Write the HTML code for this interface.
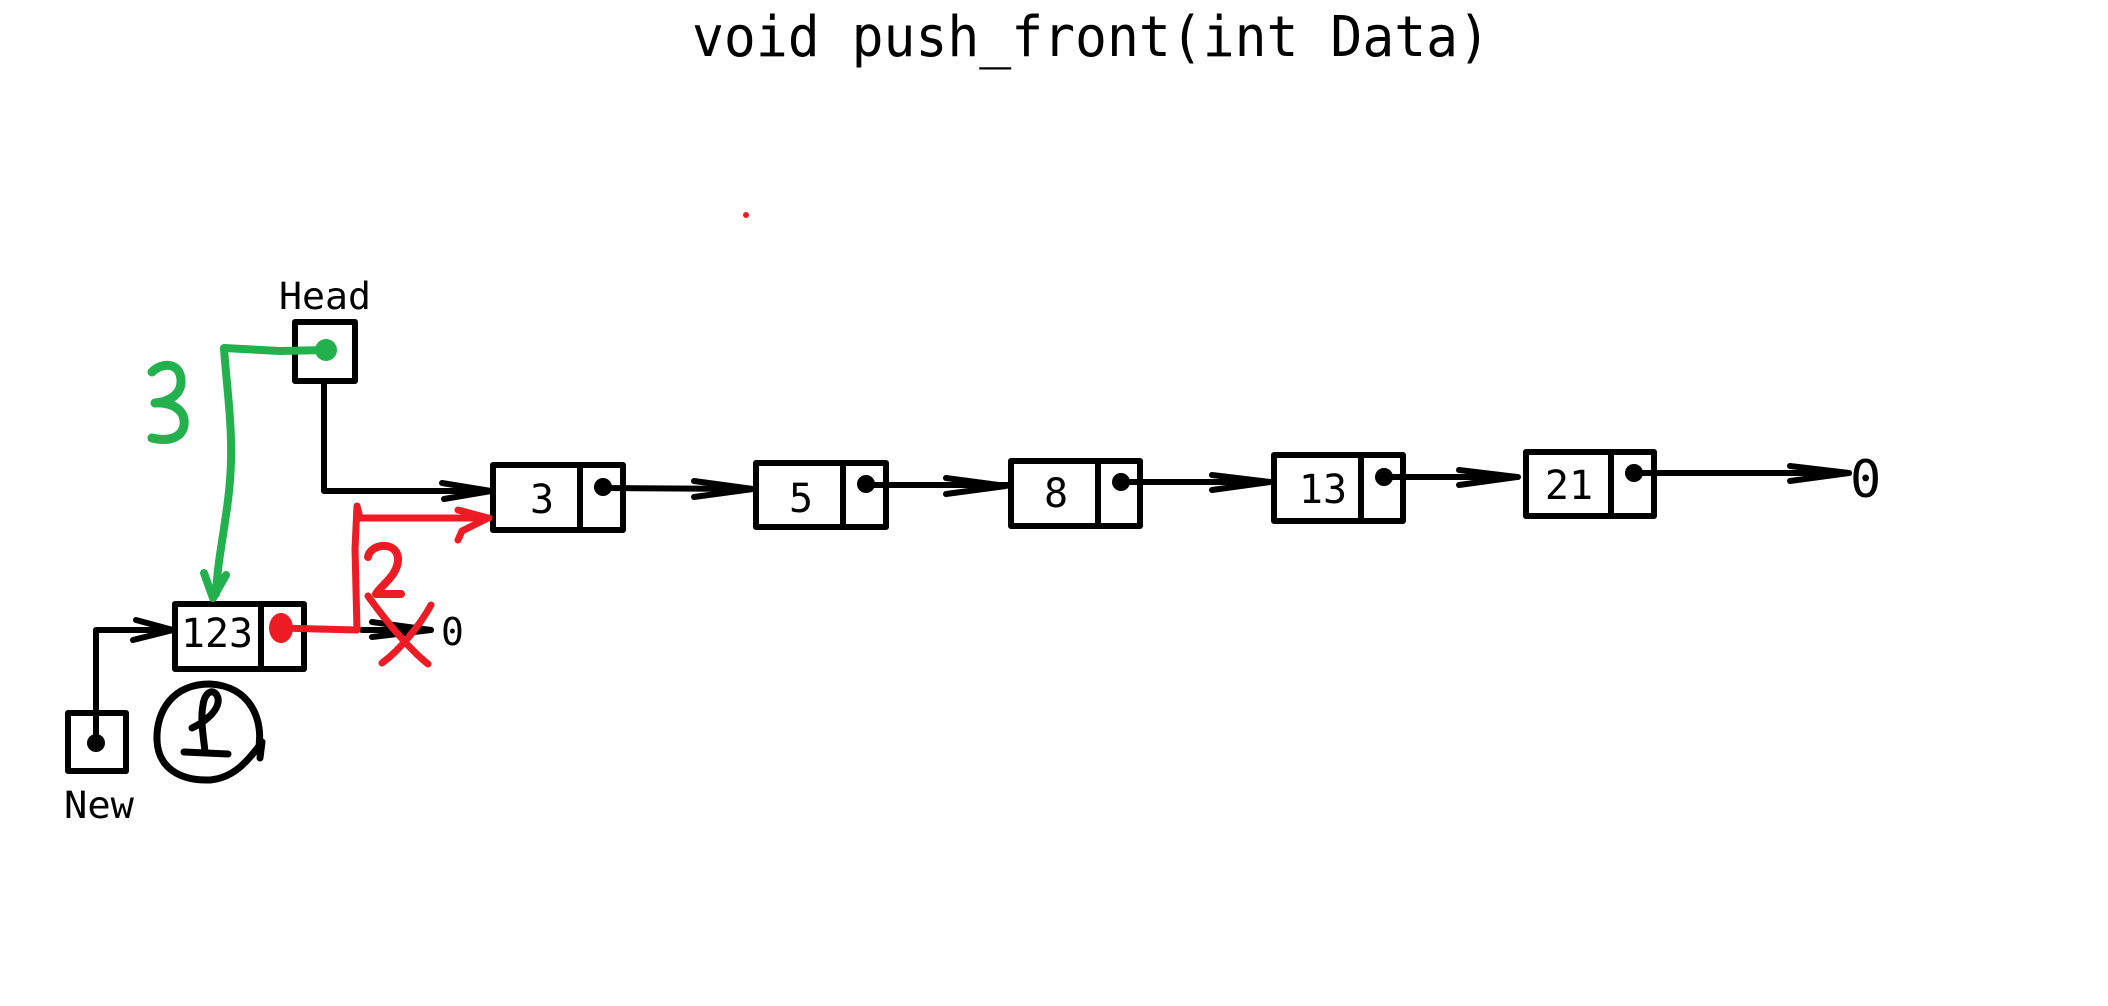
<!DOCTYPE html>
<html><head><meta charset="utf-8"><style>
html,body{margin:0;padding:0;background:#fff;width:2108px;height:1006px;overflow:hidden}
svg{display:block}
text{font-family:"DejaVu Sans Mono","Liberation Mono",monospace;fill:#000}
</style></head><body>
<svg width="2108" height="1006" viewBox="0 0 2108 1006" xmlns="http://www.w3.org/2000/svg">
<text x="692" y="56" font-size="56" textLength="798" lengthAdjust="spacingAndGlyphs">void push_front(int Data)</text>
<circle cx="746" cy="215" r="3" fill="#ed1c24"/>

<g fill="none" stroke="#000" stroke-width="6" stroke-linecap="round" stroke-linejoin="round">
<rect x="295" y="322" width="60" height="59"/>
<rect x="68" y="713" width="58" height="58"/>
<rect x="175" y="604" width="129" height="65"/><line x1="261" y1="604" x2="261" y2="669"/>
<rect x="493" y="465" width="130" height="65"/><line x1="580" y1="465" x2="580" y2="530"/>
<rect x="756" y="463" width="130" height="64"/><line x1="843" y1="463" x2="843" y2="527"/>
<rect x="1011" y="461" width="129" height="65"/><line x1="1098" y1="461" x2="1098" y2="526"/>
<rect x="1274" y="455" width="129" height="66"/><line x1="1361" y1="455" x2="1361" y2="521"/>
<rect x="1526" y="452" width="128" height="64"/><line x1="1611" y1="452" x2="1611" y2="516"/>

<polyline points="324,383 324,491 491,491"/>
<polyline points="442,483 491,491 444,499"/>
<polyline points="96,743 96,630 173,630"/>
<polyline points="136,620 173,630 133,640"/>
<line x1="603" y1="488" x2="754" y2="489"/><polyline points="694,481 753,489 694,497"/>
<line x1="866" y1="485" x2="1008" y2="485"/><polyline points="946,478 1006,486 946,494"/>
<line x1="1121" y1="482" x2="1271" y2="482"/><polyline points="1212,475 1270,482 1212,490"/>
<line x1="1384" y1="477" x2="1518" y2="477"/><polyline points="1459,470 1517,477 1459,485"/>
<line x1="1634" y1="473" x2="1849" y2="473"/><polyline points="1790,466 1849,473 1790,481"/>
<line x1="362" y1="630" x2="431" y2="630"/><polyline points="372,622 431,630 372,637"/>
<path d="M258,752 C265,720 250,686 210,684 C172,684 156,712 157,740 C158,768 180,781 210,780 C232,778 246,764 262,742 L260,758" stroke-width="7"/>
<path d="M192,728 C205,722 220,710 218,698 C215,688 205,690 203,705 C200,720 204,740 205,752 M184,752 L228,754" stroke-width="7"/>
</g>
<g fill="#000">
<circle cx="96" cy="743" r="9"/>
<circle cx="603" cy="487" r="9"/>
<circle cx="866" cy="484" r="9"/>
<circle cx="1121" cy="482" r="9"/>
<circle cx="1384" cy="477" r="9"/>
<circle cx="1634" cy="473" r="9"/>
</g>

<text x="279" y="309" font-size="37" textLength="92" lengthAdjust="spacingAndGlyphs">Head</text>
<text x="64" y="818" font-size="37" textLength="70" lengthAdjust="spacingAndGlyphs">New</text>
<text x="217" y="647" font-size="40" text-anchor="middle" textLength="72" lengthAdjust="spacingAndGlyphs">123</text>
<text x="542" y="513" font-size="40" text-anchor="middle">3</text>
<text x="801" y="512" font-size="40" text-anchor="middle">5</text>
<text x="1056" y="507" font-size="40" text-anchor="middle">8</text>
<text x="1323" y="503" font-size="40" text-anchor="middle">13</text>
<text x="1569" y="499" font-size="40" text-anchor="middle">21</text>
<text x="441" y="645" font-size="38">0</text>
<text x="1850" y="497" font-size="52">0</text>

<g fill="none" stroke="#22b14c" stroke-width="8" stroke-linecap="round" stroke-linejoin="round">
<path d="M326,350 L280,351 L224,348 C226,380 232,420 231,460 C230,510 218,550 216,594"/>
<path d="M204,573 L213,598 L226,575"/>
<path d="M152,372 C162,362 180,362 181,380 C182,395 168,402 155,403 C172,402 186,410 184,425 C182,438 168,442 152,438" stroke-width="9"/>
</g>
<circle cx="326" cy="350" r="11" fill="#22b14c"/>

<g fill="none" stroke="#ed1c24" stroke-width="7" stroke-linecap="round" stroke-linejoin="round">
<polyline points="279,628 357,630 355,549 357,506 360,518 489,518"/>
<path d="M458,510 L488,518 L462,531 L458,540"/>
<path d="M368,557 C370,544 396,540 398,558 C399,575 380,586 376,594 L401,594" stroke-width="8"/>
<path d="M368,596 C385,620 410,650 428,664"/>
<path d="M431,605 C420,625 400,650 382,663"/>
</g>
<ellipse cx="281" cy="628" rx="12" ry="15" fill="#ed1c24"/>
</svg>
</body></html>
